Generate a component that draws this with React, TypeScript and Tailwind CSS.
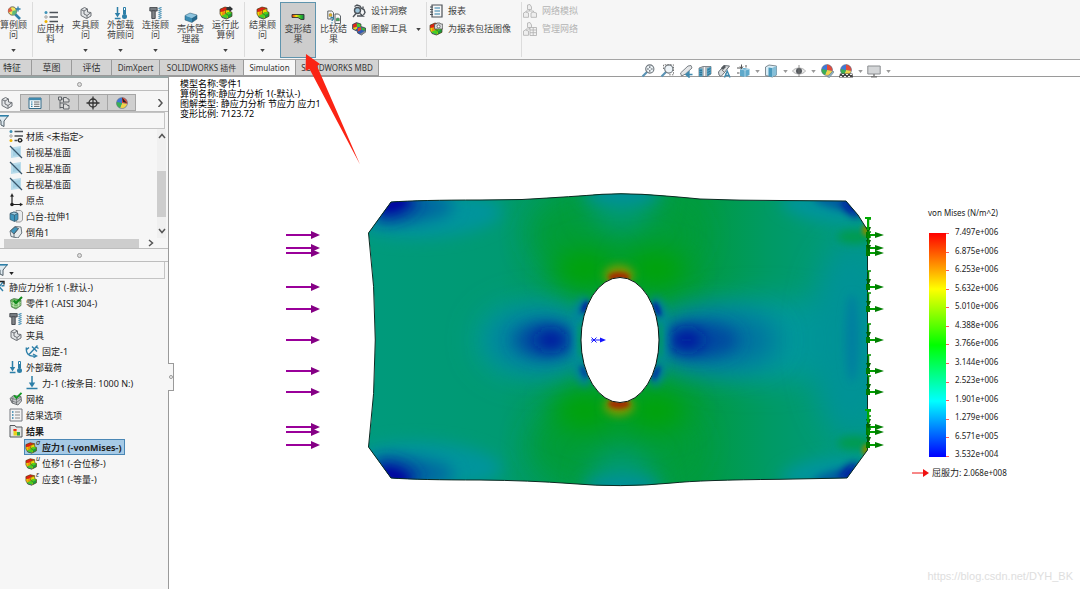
import type { ReactNode } from "react";
import clsx from "clsx";

type IconName = keyof typeof ICONS;

const INK = "#4c5258";
const BLUE = "#2d7fa8";

const femCube = (
  <>
    <path d="M1 3.200 6 1l5 1.200v3.300l2 .8v4L7.500 13 3 11.500 1 8z" fill="#efd400" />
    <path d="M1 3.200 6 1l5 1.200-4.500 1.800L5 5.500 1.200 6z" fill="#e02212" />
    <path d="M3 6.500 6 5.500l1 1.500-2 2.500-2-.5z" fill="#f08a10" />
    <path d="M5.500 8.500 8.500 6l4.500.3v1.500L9 9.500 7.500 13 3 11.500 2.500 9.800z" fill="#4bcf1e" />
    <path d="M9 9l4-2v3.300L8.500 12.700z" fill="#1c9a3c" />
    <path d="M2.500 10.200 5 11.500l2.500.5v1L3 11.500z" fill="#2a8ed6" />
    <path d="M1 3.200 6 1l5 1.200v3.300l2 .8v4L7.500 13 3 11.500 1 8z" fill="none" stroke="#4b3a24" strokeWidth=".7" />
    <path d="M6.500 4v3.500L9 9M6.500 4 11 2.500" fill="none" stroke="#4b3a24" strokeWidth=".6" />
  </>
);

const grayPart = (
  <g fill="#e2e4e6" stroke="#6d7176" strokeWidth="1" strokeLinejoin="round">
    <path d="M2 3.500 5.500 1.500 8.500 3v3l3.500.5v3.500L7.500 12.500 2 9.500z" />
    <path d="M2 3.500 5 5v3l3 1.500 4-3M8 9.500v3M5 5l3.500-2" fill="none" />
  </g>
);

const loads = (
  <g>
    <path d="M3.500 1v8M.8 12.500h5.700" stroke={BLUE} strokeWidth="1.500" />
    <path d="M.8 7h5.400l-2.700 4.500z" fill={BLUE} />
    <path d="M9.500 1.500h2v6.500h-2z" fill="#fff" stroke={BLUE} />
    <circle cx="10.500" cy="10.500" r="2.500" fill={BLUE} />
    <path d="M10.500 4v6" stroke={BLUE} />
  </g>
);

const bolt = (
  <g>
    <path d="M.8 1.500h7.400v3.500H.8z" fill="#777c81" stroke="#3c4045" strokeWidth=".8" />
    <path d="M2.800 5h3.400v7.500H2.800z" fill="#a6aaad" stroke="#3c4045" strokeWidth=".9" />
    <path d="M3 7h3M3 9h3M3 11h3" stroke="#3c4045" strokeWidth=".7" />
    <path d="M9.500 2.500 12.500 1.500M9.500 4.500l3-1M9.500 6.500l3-1M9.500 8.500l3-1M9.500 10.500l3-1M9.500 12.500l3-1" stroke={BLUE} strokeWidth="1.100" />
  </g>
);

const listDots = (
  <g>
    <path d="M5.500 2.500H14M5.500 7H14M5.500 11.500H14" stroke={INK} strokeWidth="1.500" />
    <circle cx="2" cy="2.500" r="1.500" fill="#3e93b8" />
    <circle cx="2" cy="7" r="1.200" fill="#fff" stroke="#777" strokeWidth=".7" />
    <circle cx="2" cy="11.500" r="1.500" fill="#efb400" />
  </g>
);

const ball = (
  <g>
    <circle cx="7" cy="6" r="5.500" fill="#3f78d8" />
    <path d="M7 6 7 .5A5.500 5.500 0 0 1 12.300 7z" fill="#e34b3b" />
    <path d="M7 6l5.300 1A5.500 5.500 0 0 1 5 11.100z" fill="#f0d34a" />
    <path d="M7 6 5 11.100A5.500 5.500 0 0 1 1.600 5z" fill="#39b052" />
    <circle cx="7" cy="6" r="5.500" fill="none" stroke="#777" strokeWidth=".5" />
  </g>
);

const lens = (
  <>
    <path d="M6.500 7.500 1.500 12.500" stroke="#5a93b5" strokeWidth="2.200" />
    <circle cx="8.800" cy="5" r="4.100" fill="#eef4f8" stroke="#6f767c" strokeWidth="1.100" />
  </>
);

const networkBoxes = (
  <g fill="#eee" stroke="#b5b5b5" strokeWidth=".9">
    <path d="M4.500 1 7 .5l1.500 2.500v2.500H4.500zM.5 9l2-1 3 1v4.300h-5z" />
    <path d="M6.500 5.500V7M3 8V7h7.500v1" fill="none" />
  </g>
);

const ICONS = {
  fem: femCube,
  result: <g transform="translate(0 1.800) scale(.88)">{femCube}</g>,
  part: grayPart,
  loads,
  bolt,
  list: listDots,
  study: (
    <>
      <path d="M8 8 13 13" stroke={BLUE} strokeWidth="2.600" />
      <circle cx="5.500" cy="5" r="4.200" fill="#f1e65d" stroke="#555" strokeWidth=".8" />
      <path d="M5.500 5 1.500 6.500A4 4 0 0 1 3.500 1.500z" fill="#e25f48" />
      <path d="M5.500 5 9.500 4A4 4 0 0 1 5 9z" fill="#5bb97a" />
      <path d="M11 .5v5M8.500 3h5" stroke={BLUE} strokeWidth="1.300" />
    </>
  ),
  shell: (
    <>
      <path d="M1 5.500 6 3l7 2-5 3z" fill="#8cc5e0" />
      <path d="M1 5.500 8 8v4.500L1 10z" fill="#3b8cb4" />
      <path d="M8 8l5-3v4l-5 3.500z" fill="#25688c" />
      <path d="M1 5.500 6 3l7 2v4l-5 3.500L1 10z" fill="none" stroke="#20506b" strokeWidth=".5" />
    </>
  ),
  run: (
    <>
      {femCube}
      <path d="M7.500 1h3V-.2L14 3l-3.500 3V4.200h-3z" fill="#2f3335" />
    </>
  ),
  compare: (
    <g>
      <path d="M.8 1h4l1.700 1.700V9H.8zM8 4h3.500l2 2v7.500H8z" fill="#fafafa" stroke={INK} strokeWidth=".9" />
      <path d="M2 4l1.500-.8L5 4v2.500H2z" fill="#e0b020" stroke="#777" strokeWidth=".4" />
      <path d="M9 8.500l2-.8 1.500.8V11H9z" fill="#41a35a" stroke="#777" strokeWidth=".4" />
      <path d="M3.500 8.500c.3-1.500 3-1.500 3 .1 0 1.200-1.500 1-1.500 2.400M5 12.200v1.200" stroke={BLUE} strokeWidth="1.200" fill="none" />
    </g>
  ),
  insight: (
    <g fill="none" stroke={INK} strokeWidth="1.400">
      <path d="M2.500 2.500 5 1l3 1 1.500 2.500L12 5.500l1 3-1.500 2.500" />
      <circle cx="5.500" cy="6.500" r="3" fill="#9bc3d8" />
      <path d="M4 9.500 1 13M8 9.500l3 2.500H5M11 2.500v2" />
    </g>
  ),
  plotTools: (
    <>
      <path d="M.5 2.500 4.500.5 9 2v4l-4.500 3L.5 7z" fill="#2450b8" />
      <path d="M.8 2.500 4.500.8 5 4.500.8 6z" fill="#e02a18" />
      <path d="M4.800 1 9 2.200v3L5 5z" fill="#49c92a" />
      <path d="M.8 6 5 4.700l.5 1.500L3 8z" fill="#f0d60c" />
      <path d="M5.500 6 9 4.500l4.500 1.500v4L9.500 13l-4-2z" fill="#3159b8" />
      <path d="M5.800 6.200 9 5v3l-3 1.500z" fill="#e8402a" />
      <path d="M9.500 5l4 1.200v2.500L9.500 8z" fill="#3fae3c" />
      <path d="M.5 2.500 4.500.5 9 2v2.500l4.500 1.500v4L9.500 13l-4-2V8.500L4.500 9 .5 7z" fill="none" stroke="#333" strokeWidth=".6" />
      <path d="M8.500 12.500 13.500 9.500" stroke="#85898c" strokeWidth="1.800" />
    </>
  ),
  report: (
    <g>
      <path d="M3 1h10v12H3z" fill="#f7f7f7" stroke={INK} strokeWidth="1.200" />
      <path d="M1 3h3M1 5.500h3M1 8h3M1 10.500h3" stroke={INK} strokeWidth="1" />
      <path d="M5.500 4h5.500M5.500 7h5.500M5.500 10h5.500" stroke={BLUE} strokeWidth="1.200" />
    </g>
  ),
  reportImage: (
    <>
      {femCube}
      <path d="M5.500 2h1.800l.7-1h3l.7 1h2v5H5.500z" fill="#d6d8da" stroke="#555" strokeWidth=".8" />
      <circle cx="9.600" cy="4.400" r="1.500" fill="#fff" stroke="#555" strokeWidth=".8" />
    </>
  ),
  network: (
    <>
      {networkBoxes}
      <path d="M8 9l2-1 3.500 1v4.300H8z" fill="#eee" stroke="#b5b5b5" strokeWidth=".9" />
    </>
  ),
  networkManage: (
    <>
      {networkBoxes}
      <path d="M7 5.500h6.500v8H7zM7 8h6.500M7 10.700h6.500M10.200 5.500v8" fill="#f3f3f3" stroke="#b5b5b5" strokeWidth=".9" />
    </>
  ),
  property: (
    <g>
      <path d="M1 2h12v10.500H1z" fill="#f4f8fa" stroke="#356b88" />
      <path d="M1 2h12v2.200H1z" fill="#3f89ae" />
      <path d="M3 6h1.500M3 8.200h1.500M3 10.400h1.500" stroke={BLUE} strokeWidth="1.200" />
      <path d="M6 6h5.500M6 8.200h5.500M6 10.400h5.500" stroke="#555" strokeWidth=".9" />
    </g>
  ),
  config: (
    <g fill="#ddd" stroke="#55595d" strokeWidth=".9">
      <path d="M3 1v11.500M3 3h4M3 7h4M3 11.500h4" fill="none" />
      <path d="M1.500 1h3v3h-3zM6.500 1.500h3l1 1.500H12v3H6.500zM6.500 8h3l1 1.500H12v3.500H6.500z" />
    </g>
  ),
  target: (
    <g fill="none" stroke="#333" strokeWidth="1.300">
      <circle cx="7" cy="7" r="4" />
      <path d="M7 .5v13M.5 7h13" />
    </g>
  ),
  ball: (
    <>
      <g transform="translate(0 1)">{ball}</g>
      <path d="M7 1.500 12 7l-4-1z" fill="#222" />
    </>
  ),
  filter: (
    <g>
      <path d="M.5 1.500h12L8 7v5.500L5 11V7z" fill="#dfeaf0" stroke="#4f5d66" />
      <path d="M.5 1h12v1.600H.5z" fill={BLUE} />
    </g>
  ),
  material: (
    <>
      {listDots}
      <path d="M8.500 9h5v5h-5z" fill="#f6f6f6" />
      <circle cx="11" cy="11.300" r="1.700" fill="none" stroke="#222" strokeWidth="1.400" />
    </>
  ),
  plane: (
    <>
      <path d="M2 2.500 12 1v10.500L2 13z" fill="#b9dbea" />
      <path d="M4 4.500 11 3v6.500L4 11z" fill="#a3cfe3" />
      <path d="M1 1l12 12" stroke="#38566b" strokeWidth="1.300" />
    </>
  ),
  origin: (
    <g stroke="#222" strokeWidth="1.200" fill="#222">
      <path d="M3 2v9.500h9" fill="none" />
      <path d="M3 .5 4.600 3.500H1.400zM13.800 11.500 11 13v-3z" strokeWidth=".3" />
      <circle cx="3" cy="11.500" r="1.200" />
    </g>
  ),
  extrude: (
    <g strokeWidth=".7" stroke="#35586b">
      <path d="M7 1.500h4.500l2 1.500v8l-2 2H7z" fill="#e8ebed" stroke="#777" />
      <path d="M1 4.500 5 3l4 1.500v6L5.500 12.500 1 10.500z" fill="#3f96bd" />
      <path d="M1 4.500 5 3l4 1.500L5.500 6z" fill="#9fd0e5" />
      <path d="M5.500 6v6.500" fill="none" />
    </g>
  ),
  chamfer: (
    <g strokeWidth=".8" stroke="#4b5b65">
      <path d="M1 6 6 1.500l6 .5.8 6L9 13l-7-1.500z" fill="#e6eaec" />
      <path d="M1.500 6 6 2l3.500 1.500L5 9z" fill="#3f96bd" />
      <path d="M5 9l4.500-5.500M5 9v3.500" fill="none" />
    </g>
  ),
  studyNode: (
    <g stroke={BLUE} strokeWidth="1.400" fill="none">
      <path d="M3 2l8 9M11 2l-4 5-4 5M12.500 5.500l-3 .5" />
      <path d="M8 1.500h4v3" stroke="#222" />
    </g>
  ),
  partOk: (
    <g>
      <path d="M1.500 4 5 2.500 12 4v5.500L7 13 2.500 11z" fill="#6fb662" stroke="#49744a" strokeWidth=".7" />
      <path d="M2 6.500l5 2 5-2M2.500 9l4.500 2 4.500-2.500M4.500 4v7M9.500 4.500v6" stroke="#c5e8bd" strokeWidth=".7" fill="none" />
      <path d="M4.500 4.500 7 7 13 1" stroke="#128a1c" strokeWidth="2" fill="none" />
    </g>
  ),
  fixed: (
    <g fill="none" stroke={BLUE} strokeWidth="1.400">
      <path d="M1.500 3.500c-1 5 2 9.500 8 8.500M3.500 11 12.500 1.500M7 2.500l5 5M10.500 2.500l3 2M1 6l3-2.500" />
      <path d="M8 10l3.500 2L8.500 13.500" />
    </g>
  ),
  force: (
    <g>
      <path d="M7 0v9M1.500 12.500h11" stroke={BLUE} strokeWidth="1.500" />
      <path d="M3.800 6.500h6.400L7 11.500z" fill={BLUE} />
    </g>
  ),
  mesh: (
    <g>
      <path d="M1 6.500 4.500 3.500l7.500 1 .5 4.500L9 13 3 11z" fill="#c5c8ca" stroke="#55595d" strokeWidth=".8" />
      <path d="M1.500 8.500l6 2 4.500-3.500M4 5l-.5 6M7.500 6v6.500M2 6.500l5.500 1 4.500-2.500" stroke="#55595d" strokeWidth=".6" fill="none" />
      <path d="M5 3.500 7.500 6 12.500.8" stroke="#159a25" strokeWidth="1.900" fill="none" />
    </g>
  ),
  options: (
    <g>
      <path d="M1 1h12v12H1z" fill="#f3f3f3" stroke="#777b80" strokeWidth="1" />
      <path d="M3 4h1.500M3 7h1.500M3 10h1.500" stroke={BLUE} strokeWidth="1.500" />
      <path d="M6 4h5M6 7h5M6 10h5" stroke="#888" strokeWidth="1" />
    </g>
  ),
  results: (
    <g>
      <path d="M1 1.500h5l1 1.500h6v10H1z" fill="#e4e5e6" stroke="#55595d" strokeWidth="1" />
      <path d="M4.500 5h3v3H11v3.500H4.500z" fill="#e5d21e" />
      <path d="M4.500 5h3v2h-3z" fill="#e22" />
      <path d="M8 8h3v3.500H8z" fill="#2aa34a" />
    </g>
  ),
  zoomFit: (
    <>
      {lens}
      <path d="M8.800 2.200v1.800M8.800 6v1.800M6 5h1.800M9.800 5h1.800" stroke="#555c62" strokeWidth="1.100" />
    </>
  ),
  zoomArea: (
    <>
      {lens}
      <path d="M3.500 5V.8H13.500v10H8" stroke="#777" strokeDasharray="1.500 1.200" fill="none" />
    </>
  ),
  prevView: (
    <>
      <path d="M1.500 9 9 2l3-.5 1 2.500-6.500 6L2.500 12z" fill="#e4e6e8" stroke="#7d8388" />
      <path d="M13.500 10.500H10M10 7.800 6.800 10.500l3.200 2.700z" fill="#3f89ae" stroke="#3f89ae" strokeWidth="1.300" />
    </>
  ),
  section: (
    <>
      <path d="M1 4 5 2.500h8V10l-4 2.500H1z" fill="#b4babf" stroke="#5b6268" strokeWidth=".7" />
      <path d="M1 4.500h3.500V12.500H1zM9 4.500l4-2V10l-4 2.500z" fill="#4b9abd" />
      <path d="M1.500 6.500h2.500M1.500 8.500h2.500M1.500 10.500h2.500M9.500 6l3-1.500M9.500 8.500l3-1.500M9.500 11l3-1.500" stroke="#2c6482" strokeWidth=".7" />
      <path d="M6.500 3v9" stroke="#f1f3f4" />
    </>
  ),
  annotate: (
    <>
      <path d="M1.500 8 7 1.500 12.500 2l-5 6.500-3.500 4L2 11z" fill="#d9dcde" stroke="#6b7177" />
      <path d="M4 4l3-3 2 2-3 3z" fill="#555a5f" />
      <path d="M4.500 5.500l4 4" stroke="#777" />
      <path d="M7.500 13.500 10.200 7l2.800 6.500M8.500 11.500h3.500" stroke="#3f89ae" strokeWidth="1.400" fill="none" />
    </>
  ),
  orient: (
    <>
      <path d="M4 5 8 4l5.500 1v6L9 13l-5-1z" fill="#5fa9cb" />
      <path d="M4 5l5 1v7M9 6l4.500-1" stroke="#cfe7f2" strokeWidth=".7" fill="none" />
      <path d="M1 4h5M1 9h2.500M5.500.5v4M4 2.500 5.500 4.500 7 2.500M10 1v2.500" stroke="#555" fill="none" />
    </>
  ),
  display: (
    <>
      <path d="M1.500 3 5 1l7.500 1v9L8.500 13l-7-1.500z" fill="#d9edf6" stroke="#65717a" strokeWidth=".8" />
      <path d="M4.500 3.500 8 4v9l-3.500-.8z" fill="#4b9abd" />
      <path d="M8 4l4.500-2v9L8 13z" fill="#86bfd8" />
    </>
  ),
  eye: (
    <>
      <path d="M.5 7C3 3 11 3 13.500 7 11 11 3 11 .5 7z" fill="#e9e9e9" stroke="#a5a5a5" strokeWidth=".8" />
      <circle cx="7" cy="7" r="3" fill="#55595d" />
      <path d="M7 1v12" stroke="#777" strokeWidth=".8" />
    </>
  ),
  appearance: (
    <>
      {ball}
      <path d="M7.500 13 13 7l1 1-4.500 5.500z" fill="#8fb9cc" stroke="#6b7a84" strokeWidth=".6" />
    </>
  ),
  scene: (
    <>
      {ball}
      <path d="M1 9.500h12.500l.5 4H0z" fill="#444" />
      <path d="M3 10.500h2M7 10.500h2M11 10.500h2M1 12.500h2M5 12.500h2M9 12.500h2" stroke="#eee" strokeWidth="1.200" />
    </>
  ),
  monitor: (
    <>
      <path d="M.8 2h12.400v8H.8z" fill="#d4d6d8" stroke="#8a8d90" />
      <path d="M7 10v2.500M4 12.800h6" stroke="#777" strokeWidth="1.400" />
    </>
  ),
};

function Icon({ name, className }: { name: IconName; className?: string }) {
  return (
    <svg viewBox="0 0 14 14" aria-hidden="true" className={clsx("size-[14px] shrink-0", className)}>
      {ICONS[name]}
    </svg>
  );
}

function Caret({ className }: { className?: string }) {
  return (
    <svg viewBox="0 0 6 4" aria-hidden="true" className={clsx("h-[3px] w-[5px] shrink-0", className)}>
      <path d="M0 0h6L3 4z" fill="currentColor" />
    </svg>
  );
}

function RibbonButton({ icon, lines, menu }: { icon: IconName; lines: [string, string]; menu?: boolean }) {
  return (
    <button className={clsx("flex w-[35px] shrink-0 flex-col items-center", menu ? "pt-[6px]" : "pt-[10px]")}>
      <Icon name={icon} />
      <span className="whitespace-nowrap text-[9px] leading-[10px]">
        {lines[0]}
        <br />
        {lines[1]}
      </span>
      {menu && <Caret className="mt-[9px]" />}
    </button>
  );
}

function Divider() {
  return <div className="my-[2px] ml-px w-px shrink-0 bg-[#dcdcdc]" />;
}

function SmallButton({ icon, label, menu, disabled }: { icon: IconName; label: string; menu?: boolean; disabled?: boolean }) {
  return (
    <button disabled={disabled} className="flex h-[18px] items-center gap-[5px] whitespace-nowrap text-[9px] disabled:text-[#b4b4b4]">
      <Icon name={icon} />
      {label}
      {menu && <Caret className="ml-[4px]" />}
    </button>
  );
}

function Ribbon() {
  return (
    <header className="flex h-[60px] overflow-hidden border-b border-[#a5a5a5] bg-[#f6f6f6] text-[#444]">
      <div className="-ml-[4px] flex shrink-0">
        <RibbonButton icon="study" lines={["算例顾", "问"]} menu />
      </div>
      <Divider />
      <RibbonButton icon="list" lines={["应用材", "料"]} />
      <RibbonButton icon="part" lines={["夹具顾", "问"]} menu />
      <RibbonButton icon="loads" lines={["外部载", "荷顾问"]} menu />
      <RibbonButton icon="bolt" lines={["连接顾", "问"]} menu />
      <RibbonButton icon="shell" lines={["壳体管", "理器"]} />
      <RibbonButton icon="run" lines={["运行此", "算例"]} menu />
      <Divider />
      <RibbonButton icon="fem" lines={["结果顾", "问"]} menu />
      <button className="mb-px mt-[2px] flex w-[36px] shrink-0 flex-col items-center border border-[#5f94ad] bg-[#cdcdcd] pt-[10px]">
        <svg viewBox="0 0 14 8" aria-hidden="true" className="mb-[3px] h-[8px] w-[14px]">
          <defs>
            <linearGradient id="deformed">
              <stop offset="0" stopColor="#e8210f" />
              <stop offset=".35" stopColor="#f5e60c" />
              <stop offset=".7" stopColor="#35c326" />
              <stop offset="1" stopColor="#117e4c" />
            </linearGradient>
          </defs>
          <path d="M1 1.500h12v5H10L7 4.500H1z" fill="url(#deformed)" stroke="#333" strokeWidth=".9" />
        </svg>
        <span className="whitespace-nowrap text-[9px] leading-[10px]">
          变形结
          <br />果
        </span>
      </button>
      <RibbonButton icon="compare" lines={["比较结", "果"]} />
      <div className="flex w-[74px] shrink-0 flex-col pl-px pt-[2px]">
        <SmallButton icon="insight" label="设计洞察" />
        <SmallButton icon="plotTools" label="图解工具" menu />
      </div>
      <Divider />
      <div className="flex w-[93px] shrink-0 flex-col pl-[2px] pt-[2px]">
        <SmallButton icon="report" label="报表" />
        <SmallButton icon="reportImage" label="为报表包括图像" />
      </div>
      <Divider />
      <div className="flex shrink-0 flex-col pl-px pt-[2px]">
        <SmallButton icon="network" label="网络模拟" disabled />
        <SmallButton icon="networkManage" label="管理网络" disabled />
      </div>
    </header>
  );
}

const TABS = [
  { label: "特征", width: "w-[32px] pr-[7px] text-[9px]" },
  { label: "草图", width: "w-[40px] text-[9px]" },
  { label: "评估", width: "w-[40px] text-[9px]" },
  { label: "DimXpert", width: "w-[48px] text-[8px]" },
  { label: "SOLIDWORKS 插件", width: "w-[84px] text-[8px]" },
  { label: "Simulation", width: "w-[52px] text-[8px]", active: true },
  { label: "SOLIDWORKS MBD", width: "w-[83px] text-[8px]" },
];

const VIEW_TOOLS: { icon: IconName; label: string; menu?: boolean }[] = [
  { icon: "zoomFit", label: "整屏显示全图" },
  { icon: "zoomArea", label: "局部放大" },
  { icon: "prevView", label: "上一视图" },
  { icon: "section", label: "剖面视图" },
  { icon: "annotate", label: "动态注解视图" },
  { icon: "orient", label: "视图定向", menu: true },
  { icon: "display", label: "显示样式", menu: true },
  { icon: "eye", label: "隐藏/显示项目", menu: true },
  { icon: "appearance", label: "编辑外观" },
  { icon: "scene", label: "应用布景", menu: true },
  { icon: "monitor", label: "视图设定", menu: true },
];

function TabRow() {
  return (
    <div className="relative z-10 flex h-[16px] bg-white">
      <nav className="flex shrink-0 border-b border-[#9a9a9a]">
        {TABS.map((tab) => (
          <button
            key={tab.label}
            className={clsx(
              "flex shrink-0 items-center justify-center whitespace-nowrap border-r border-[#9a9a9a] leading-none text-[#333]",
              tab.width,
              tab.active ? "bg-[#f8f8f8]" : "bg-[#d3d3d3]",
            )}
          >
            {tab.label}
          </button>
        ))}
      </nav>
      <div className="ml-[262px] mt-[4px] flex h-[14px]">
        {VIEW_TOOLS.map((tool) => (
          <button
            key={tool.label}
            aria-label={tool.label}
            className={clsx("flex shrink-0 items-center text-[#999]", tool.menu ? "w-[28px] gap-[5px]" : "w-[19px]")}
          >
            <Icon name={tool.icon} />
            {tool.menu && <Caret />}
          </button>
        ))}
      </div>
    </div>
  );
}

function TreeRow({ icon, children, indent, badge, selected, bold }: {
  icon: IconName;
  children: ReactNode;
  indent: string;
  badge?: string;
  selected?: boolean;
  bold?: boolean;
}) {
  return (
    <li className={clsx("flex h-[16px]", indent)}>
      <button
        className={clsx(
          "relative flex items-center gap-[3px] whitespace-nowrap border pr-[2px] text-[9px] leading-none",
          selected ? "border-[#4a87b5] bg-[#a6cae6]" : "border-transparent",
          (selected || bold) && "font-bold",
        )}
      >
        <Icon name={icon} />
        {badge && <span className="absolute left-[11px] top-0 text-[7px] font-normal italic leading-[6px]">{badge}</span>}
        {children}
      </button>
    </li>
  );
}

function Grip() {
  return (
    <div className="flex h-[13px] items-center border-b border-[#bdbdbd] pl-[77px]">
      <span className="size-[5px] rounded-full border border-[#999] bg-[#ddd]" />
    </div>
  );
}

function Chevron({ d }: { d: string }) {
  return (
    <svg viewBox="0 0 8 8" aria-hidden="true" className="size-[8px]">
      <path d={d} fill="none" stroke="#555" strokeWidth="1.500" />
    </svg>
  );
}

const PANEL_TABS: { icon: IconName; label: string }[] = [
  { icon: "property", label: "属性" },
  { icon: "config", label: "配置" },
  { icon: "target", label: "尺寸专家" },
  { icon: "ball", label: "外观" },
];

function Sidebar() {
  return (
    <aside className="relative w-[169px] shrink-0 border-r border-[#9a9a9a] bg-[#f6f6f6] text-[#222]">
      <div className="h-[2px] bg-[#94a3a3]" />
      <Grip />
      <div className="mt-[3px] flex h-[18px] border-b border-[#bbb]">
        <button aria-label="设计树" className="flex w-[20px] items-center">
          <Icon name="part" />
        </button>
        {PANEL_TABS.map((tab) => (
          <button key={tab.label} aria-label={tab.label} className="flex w-[29px] items-center justify-center border border-r-0 border-[#a5a5a5] bg-[#cfcfcf] last-of-type:border-r">
            <Icon name={tab.icon} />
          </button>
        ))}
        <span className="ml-auto flex items-center pr-[4px]">
          <Chevron d="M2.500 0 6 4 2.500 8" />
        </span>
      </div>
      <label className="mr-[3px] flex h-[17px] items-center border border-l-0 border-[#c4c4c4]">
        <Icon name="filter" className="-ml-[4px]" />
        <input aria-label="过滤特征" className="h-full min-w-0 flex-1 bg-transparent text-[9px] outline-none" />
      </label>
      <div className="flex h-[109px]">
        <ul className="-mt-px flex-1">
          <TreeRow icon="material" indent="pl-[8px]">材质 &lt;未指定&gt;</TreeRow>
          <TreeRow icon="plane" indent="pl-[8px]">前视基准面</TreeRow>
          <TreeRow icon="plane" indent="pl-[8px]">上视基准面</TreeRow>
          <TreeRow icon="plane" indent="pl-[8px]">右视基准面</TreeRow>
          <TreeRow icon="origin" indent="pl-[8px]">原点</TreeRow>
          <TreeRow icon="extrude" indent="pl-[8px]">凸台-拉伸1</TreeRow>
          <TreeRow icon="chamfer" indent="pl-[8px]">倒角1</TreeRow>
        </ul>
        <div className="mr-[2px] flex w-[9px] flex-col items-center bg-[#f0f0f0] py-[3px]">
          <Chevron d="M1 6 4 2.500 7 6" />
          <span className="mt-[31px] h-[46px] w-full bg-[#cdcdcd]" />
          <span className="mt-auto flex">
            <Chevron d="M1 2 4 5.500 7 2" />
          </span>
        </div>
      </div>
      <div className="relative flex h-[11px] items-center border-b border-[#bdbdbd] bg-[#f6f6f6] pl-[4px]">
        <span className="h-[9px] w-[135px] bg-[#cdcdcd]" />
        <span className="ml-[8px]">
          <Chevron d="M2 1 5.500 4 2 7" />
        </span>
      </div>
      <Grip />
      <label className="mr-[3px] flex h-[17px] items-center border border-l-0 border-t-0 border-[#c4c4c4]">
        <Icon name="filter" className="-ml-[5px]" />
        <Caret className="mt-[6px]" />
        <input aria-label="过滤算例" className="h-full min-w-0 flex-1 bg-transparent text-[9px] outline-none" />
      </label>
      <ul className="overflow-hidden">
        <TreeRow icon="studyNode" indent="-ml-[9px]">静应力分析 1 (-默认-)</TreeRow>
        <TreeRow icon="partOk" indent="pl-[8px]">零件1 (-AISI 304-)</TreeRow>
        <TreeRow icon="bolt" indent="pl-[8px]">连结</TreeRow>
        <TreeRow icon="part" indent="pl-[8px]">夹具</TreeRow>
        <TreeRow icon="fixed" indent="pl-[24px]">固定-1</TreeRow>
        <TreeRow icon="loads" indent="pl-[8px]">外部载荷</TreeRow>
        <TreeRow icon="force" indent="pl-[24px]">力-1 (:按条目: 1000 N:)</TreeRow>
        <TreeRow icon="mesh" indent="pl-[8px]">网格</TreeRow>
        <TreeRow icon="options" indent="pl-[8px]">结果选项</TreeRow>
        <TreeRow icon="results" indent="pl-[8px]" bold>结果</TreeRow>
        <TreeRow icon="result" indent="pl-[24px]" badge="σ" selected>应力1 (-vonMises-)</TreeRow>
        <TreeRow icon="result" indent="pl-[24px]" badge="u">位移1 (-合位移-)</TreeRow>
        <TreeRow icon="result" indent="pl-[24px]" badge="ε">应变1 (-等量-)</TreeRow>
      </ul>
      <button aria-label="折叠面板" className="absolute -right-[6px] top-[287px] z-10 flex h-[28px] w-[6px] items-center justify-center border border-l-0 border-[#9a9a9a] bg-[#f6f6f6]">
        <span className="size-[4px] rounded-full border border-[#999]" />
      </button>
    </aside>
  );
}

const ARROW_ROWS = [235, 248, 253, 287, 309, 340, 371, 392, 427, 432, 445];
const PLATE =
  "M391 202 Q420 200 480 200 L522 199.500 Q575 196.500 602 194.300 Q620 193.200 642 194.300 Q675 196.500 700 199 Q740 200.500 780 200.500 L846 201 L858 215 L867.500 230 L867.500 450 L847 478 L780 479.300 Q700 480 672 483 Q620 488 570 483.500 Q530 480.500 480 480 Q420 480 391 478 L368.500 447 Q382 340 368.500 233 Z";

type Blob = [cx: number, cy: number, rx: number, ry: number, fill: string, blur: "b2" | "b4" | "b8" | "b14", rotate?: number];

const BLOBS: Blob[] = [
  [615, 235, 85, 45, "#009c38", "b14"],
  [615, 445, 85, 45, "#009c38", "b14"],
  [538, 340, 62, 40, "#00999a", "b14"],
  [760, 340, 115, 42, "#009899", "b14"],
  [850, 340, 38, 96, "#009396", "b14"],
  [622, 198, 34, 34, "#009a74", "b14"],
  [622, 482, 34, 34, "#009a74", "b14"],
  [622, 193, 38, 11, "#008f9c", "b8"],
  [622, 487, 38, 11, "#008f9c", "b8"],
  [584, 270, 32, 18, "#00a400", "b14"],
  [656, 270, 32, 18, "#00a400", "b14"],
  [584, 410, 32, 18, "#00a400", "b14"],
  [656, 410, 32, 18, "#00a400", "b14"],
  [538, 340, 46, 26, "#0078a0", "b14"],
  [545, 340, 30, 17, "#004ca0", "b8"],
  [551, 340, 15, 9, "#0018a0", "b8"],
  [718, 340, 60, 28, "#0070a0", "b14"],
  [700, 340, 38, 17, "#0048a0", "b8"],
  [687, 340, 16, 10, "#0014a0", "b8"],
  [852, 338, 7, 44, "#0080a0", "b4"],
  [430, 216, 72, 22, "#00949c", "b8", -4],
  [430, 464, 72, 22, "#00949c", "b8", 4],
  [412, 208, 42, 14, "#0068a0", "b8", -4],
  [412, 472, 42, 14, "#0068a0", "b8", 4],
  [396, 207, 24, 11, "#0028a0", "b8", -20],
  [396, 473, 24, 11, "#0028a0", "b8", 20],
  [394, 204, 16, 6, "#0000a0", "b4", -20],
  [394, 476, 16, 6, "#0000a0", "b4", 20],
  [822, 208, 42, 13, "#00949e", "b8", 10],
  [822, 472, 42, 13, "#00949e", "b8", -10],
  [838, 203, 26, 6, "#0058a0", "b4", 14],
  [838, 476, 26, 6, "#0058a0", "b4", -14],
  [851, 207, 12, 5, "#0008a0", "b4", 48],
  [849, 473, 12, 5, "#0008a0", "b4", -48],
  [855, 237, 18, 7, "#009b50", "b4"],
  [855, 443, 18, 7, "#009b50", "b4"],
  [866, 230, 4, 6, "#7a8c00", "b2"],
  [866, 450, 4, 6, "#7a8c00", "b2"],
  [578, 340, 4, 26, "#00909a", "b4"],
  [663, 340, 4, 26, "#00909a", "b4"],
  [581, 309, 6, 13, "#0080a0", "b4", 22],
  [659, 309, 6, 13, "#0080a0", "b4", -22],
  [582, 374, 6, 13, "#0080a0", "b4", -22],
  [658, 374, 6, 13, "#0080a0", "b4", 22],
  [585, 307, 3, 7, "#0028a0", "b2", 24],
  [657, 309, 3, 8, "#0028a0", "b2", -24],
  [584, 372, 3, 7, "#0048a0", "b2", -24],
  [656, 373, 3, 8, "#0038a0", "b2", 24],
  [580, 340, 2, 18, "#009a60", "b2"],
  [661, 340, 2, 18, "#009a60", "b2"],
  [619, 275, 15, 10, "#789a00", "b4"],
  [619, 406, 15, 10, "#789a00", "b4"],
  [619, 277, 11, 5, "#a03000", "b2"],
  [619, 404, 11, 5, "#a03000", "b2"],
];

function StressPlot() {
  return (
    <svg viewBox="280 190 610 300" role="img" aria-label="von Mises" className="min-w-0 max-w-[610px] flex-1">
      <defs>
        <linearGradient id="plate" x1="368" x2="868" y1="0" y2="0" gradientUnits="userSpaceOnUse">
          <stop offset="0" stopColor="#009a7c" />
          <stop offset=".26" stopColor="#009a72" />
          <stop offset=".42" stopColor="#009b4a" />
          <stop offset=".66" stopColor="#009b40" />
          <stop offset=".8" stopColor="#009a64" />
          <stop offset="1" stopColor="#009a86" />
        </linearGradient>
        <clipPath id="outline">
          <path d={PLATE} />
        </clipPath>
        <filter id="b2" x="-200%" y="-100%" width="500%" height="300%"><feGaussianBlur stdDeviation="2" /></filter>
        <filter id="b4" x="-200%" y="-150%" width="500%" height="400%"><feGaussianBlur stdDeviation="4" /></filter>
        <filter id="b8" x="-100%" y="-200%" width="300%" height="500%"><feGaussianBlur stdDeviation="8" /></filter>
        <filter id="b14" x="-100%" y="-150%" width="300%" height="400%"><feGaussianBlur stdDeviation="14" /></filter>
      </defs>
      <g clipPath="url(#outline)">
        <path d="M360 190h520v300H360z" fill="url(#plate)" />
        {BLOBS.map(([cx, cy, rx, ry, fill, blur, rotate = 0], i) => (
          <g key={i} transform={`rotate(${rotate} ${cx} ${cy})`}>
            <ellipse cx={cx} cy={cy} rx={rx} ry={ry} fill={fill} filter={`url(#${blur})`} />
          </g>
        ))}
      </g>
      <path d={PLATE} fill="none" stroke="#0c2a22" strokeWidth="1" />
      <ellipse cx="620" cy="340" rx="39" ry="62.500" fill="#fff" stroke="#0c1a16" strokeWidth="1" />
      <g stroke="#1414ff" fill="#1414ff">
        <path d="M591.500 337.500l5 5M596.500 337.500l-5 5M591 340h9" strokeWidth="1" />
        <path d="M600 337.500 606 340l-6 2.500z" stroke="none" />
      </g>
      {ARROW_ROWS.map((y) => (
        <g key={y}>
          <path d={`M286 ${y}h27`} stroke="#9a009a" strokeWidth="2" />
          <path d={`M311 ${y - 4}l9 4-9 4z`} fill="#850085" />
          <path d={`M868 ${y}h9`} stroke="#00a000" strokeWidth="2" />
          <path d={`M875 ${y - 3}l9 3-9 3z`} fill="#007f00" />
          <path d={`M866 ${y - 3}h4v6h-4z`} fill="#007a00" />
          <path d={`M868.500 ${y - 16}v12M867 ${y - 16}h4`} stroke="#008a00" strokeWidth="1.500" />
          <path d={`M866 ${y - 8}h5l-2.500 6z`} fill="#006000" />
        </g>
      ))}
      {[218, 410].map((y) => (
        <path key={y} d={`M865 ${y}h6M868 ${y}v12`} stroke="#00a800" strokeWidth="2" />
      ))}
    </svg>
  );
}

const SCALE = [
  "7.497e+006", "6.875e+006", "6.253e+006", "5.632e+006", "5.010e+006", "4.388e+006", "3.766e+006",
  "3.144e+006", "2.523e+006", "1.901e+006", "1.279e+006", "6.571e+005", "3.532e+004",
];

function Legend() {
  return (
    <section className="ml-[22px] shrink-0 whitespace-nowrap pt-[18px] text-[8px] leading-[10px] text-[#222]">
      <h2 className="pl-[16px]">von Mises (N/m^2)</h2>
      <div className="mt-[9px] flex pl-[17px]">
        <div className="mt-[6px] h-[224px] w-[17px] bg-[linear-gradient(to_bottom,#f00_0%,#ff0_25%,#0f0_50%,#0ff_75%,#00f_100%)]" />
        <div className="mt-[6px] flex h-[224px] w-[3px] flex-col justify-between">
          {SCALE.map((value) => (
            <span key={value} className="h-px bg-[#ff5a5a]" />
          ))}
        </div>
        <ol className="ml-[6px] flex h-[232px] flex-col justify-between">
          {SCALE.map((value) => (
            <li key={value}>{value}</li>
          ))}
        </ol>
      </div>
      <p className="mt-[9px] flex items-center gap-[3px]">
        <svg viewBox="0 0 17 8" aria-hidden="true" className="h-[8px] w-[17px]">
          <path d="M0 4h12" stroke="#f01010" />
          <path d="M11 0l6 4-6 4z" fill="#f01010" />
        </svg>
        <span>
          <span className="text-[9px]">屈服力:</span> 2.068e+008
        </span>
      </p>
    </section>
  );
}

function Viewport() {
  return (
    <main className="relative min-w-0 flex-1 border-t border-[#9a9a9a] bg-white">
      <div className="h-[113px] whitespace-nowrap pl-[11px] pt-[2px] text-[9px] leading-[10px] text-black">
        <p>模型名称:零件1</p>
        <p>算例名称:静应力分析 1(-默认-)</p>
        <p>图解类型: 静应力分析 节应力 应力1</p>
        <p>变形比例: 7123.72</p>
      </div>
      <div className="flex items-start pl-[111px]">
        <StressPlot />
        <Legend />
      </div>
      <p className="absolute bottom-[5px] right-[7px] font-['Liberation_Sans',sans-serif] text-[11px] leading-[16px] text-[#dedede]">
        https://blog.csdn.net/DYH_BK
      </p>
    </main>
  );
}

export default function App() {
  return (
    <div className="relative flex min-h-screen flex-col overflow-hidden bg-white font-['Noto_Sans','Noto_Sans_CJK_SC',sans-serif]">
      <Ribbon />
      <TabRow />
      <div className="flex flex-1">
        <Sidebar />
        <Viewport />
      </div>
      <svg viewBox="0 0 60 112" aria-hidden="true" className="pointer-events-none absolute left-[301px] top-[54px] z-20 h-[112px] w-[60px]">
        <path d="M5 0 19 10l-3 2L59 110.500 8.500 15 4.500 17z" fill="#fb2414" />
      </svg>
    </div>
  );
}
